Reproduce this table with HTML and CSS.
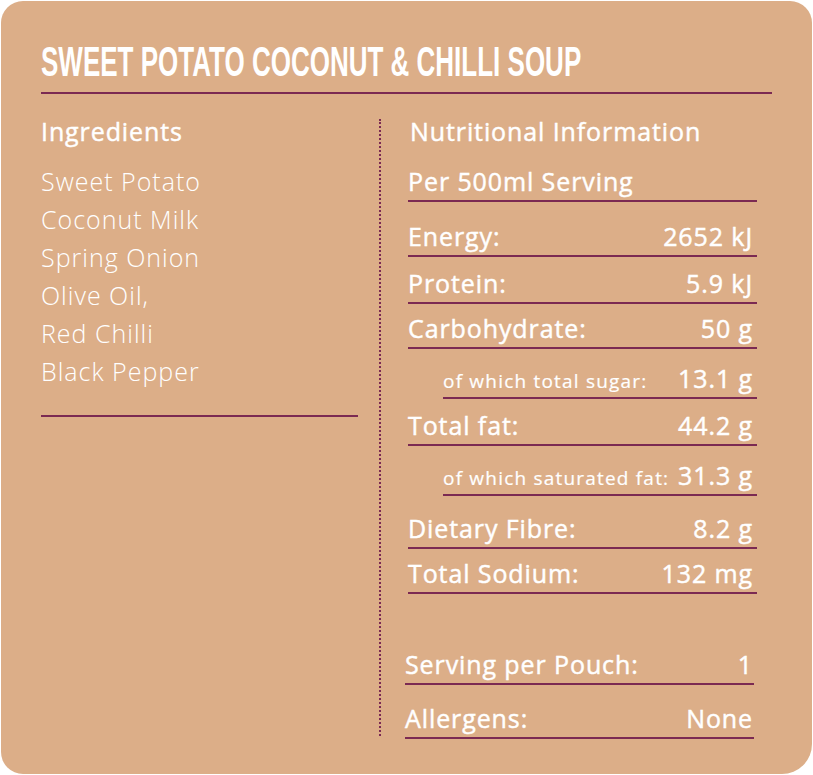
FILE: index.html
```html
<!DOCTYPE html>
<html>
<head>
<meta charset="utf-8">
<link rel="stylesheet" href="styles.css">
</head>
<body>
<div class="card">
  <h1 class="title"><span class="title-text">SWEET POTATO COCONUT &amp; CHILLI SOUP</span></h1>
  <div class="columns">
    <div class="left">
      <h2 class="heading">Ingredients</h2>
      <ul class="ingredients">
        <li>Sweet Potato</li>
        <li>Coconut Milk</li>
        <li>Spring Onion</li>
        <li>Olive Oil,</li>
        <li>Red Chilli</li>
        <li>Black Pepper</li>
      </ul>
    </div>
    <div class="divider"></div>
    <div class="right">
      <h2 class="heading heading-right">Nutritional Information</h2>
      <div class="row serving">Per 500ml Serving</div>
      <div class="row first"><span>Energy:</span><span class="val">2652 kJ</span></div>
      <div class="row"><span>Protein:</span><span class="val">5.9 kJ</span></div>
      <div class="row tight"><span>Carbohydrate:</span><span class="val">50 g</span></div>
      <div class="row sub spaced"><span class="sublabel">of which total sugar:</span><span class="val">13.1 g</span></div>
      <div class="row"><span>Total fat:</span><span class="val">44.2 g</span></div>
      <div class="row sub spaced"><span class="sublabel">of which saturated fat:</span><span class="val">31.3 g</span></div>
      <div class="row wide"><span>Dietary Fibre:</span><span class="val">8.2 g</span></div>
      <div class="row tight"><span>Total Sodium:</span><span class="val">132 mg</span></div>
      <div class="row footer far"><span>Serving per Pouch:</span><span class="val">1</span></div>
      <div class="row footer last"><span>Allergens:</span><span class="val">None</span></div>
    </div>
  </div>
</div>
</body>
</html>
```

FILE: styles.css
```css
html, body {
  margin: 0;
  padding: 0;
  background: #ffffff;
}

.card {
  box-sizing: border-box;
  margin: 1px 0 0 1px;
  width: 811px;
  height: 773px;
  background: #dcae88;
  border-radius: 22px 22px 30px 22px;
  padding: 40px 41px 0 40px;
  color: #ffffff;
  font-family: "Open Sans", "Lato", sans-serif;
  letter-spacing: 1px;
}

.title {
  margin: 0;
  font-family: "Liberation Sans", sans-serif;
  font-weight: 700;
  font-size: 26px;
  line-height: 42px;
  height: 42px;
  padding-bottom: 9px;
  border-bottom: 2px solid #7b2a52;
  width: 731px;
  white-space: nowrap;
  letter-spacing: 0;
}

.title-text {
  display: inline-block;
  line-height: 42px;
  transform: scaleY(1.61);
  transform-origin: center center;
}

.columns {
  display: flex;
  margin-top: 22px;
}

.left {
  width: 317px;
}

.heading {
  margin: 0;
  font-size: 25px;
  font-weight: 500;
  letter-spacing: 0.9px;
  line-height: 30px;
  -webkit-text-stroke: 0.45px #ffffff;
}

.ingredients {
  list-style: none;
  margin: 16px 0 0 0;
  padding: 0 0 25px 0;
  font-size: 25px;
  font-weight: 300;
  line-height: 38px;
  border-bottom: 2px solid #7b2a52;
}

.divider {
  width: 0;
  height: 617px;
  margin-top: 3px;
  border-left: 2px dotted #7b2a52;
  margin-left: 21px;
  margin-right: 27px;
}

.right {
  width: 349px;
}

.heading-right {
  margin-left: 2px;
}

.row {
  display: flex;
  justify-content: space-between;
  align-items: baseline;
  font-size: 25px;
  line-height: 34px;
  height: 34px;
  padding-bottom: 2px;
  border-bottom: 2px solid #7b2a52;
  margin-top: 9px;
  font-weight: 500;
  letter-spacing: 0.9px;
  -webkit-text-stroke: 0.45px #ffffff;
}

.val {
  padding-right: 4px;
}

.serving {
  margin-top: 18px;
}

.first {
  margin-top: 17px;
}

.tight {
  margin-top: 7px;
}

.spaced {
  margin-top: 12px;
}

.wide {
  margin-top: 15px;
}

.last {
  margin-top: 16px;
}

.far {
  margin-top: 53px;
}

.sub {
  margin-left: 35px;
}

.sublabel {
  font-size: 19px;
  font-weight: 400;
  letter-spacing: 1.2px;
  -webkit-text-stroke: 0.2px #ffffff;
}

.footer {
  margin-left: -3px;
  margin-right: 3px;
}

.footer .val {
  padding-right: 1px;
}
```
